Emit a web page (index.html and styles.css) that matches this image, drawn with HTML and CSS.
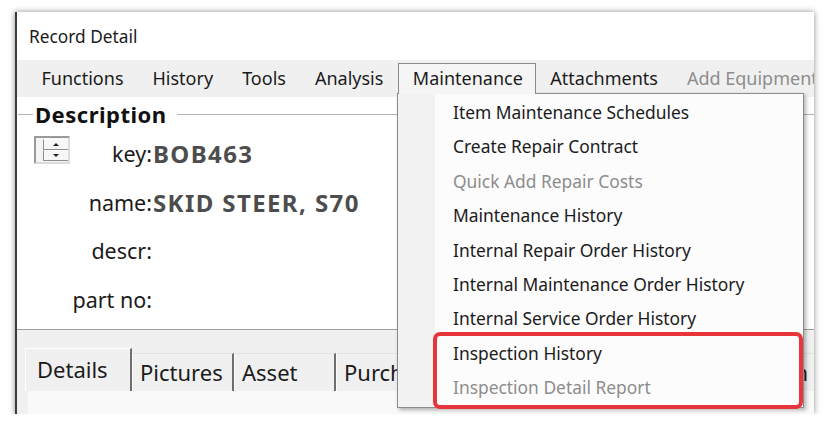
FILE: index.html
```html
<!DOCTYPE html>
<html>
<head>
<meta charset="utf-8">
<link rel="stylesheet" href="styles.css">
</head>
<body>
<div class="window">
  <div class="titlebar">Record Detail</div>
  <div class="menubar">
    <div class="mi">Functions</div>
    <div class="mi">History</div>
    <div class="mi">Tools</div>
    <div class="mi">Analysis</div>
    <div class="mi open">Maintenance</div>
    <div class="mi">Attachments</div>
    <div class="mi disabled">Add Equipment</div>
  </div>
  <div class="content">
    <div class="legend"><span class="legend-line short"></span><span class="legend-text">Description</span><span class="legend-line long"></span></div>
    <div class="row first">
      <div class="lab with-spin">
        <span class="spin"><span class="spin-btn"><i class="tri up"></i></span><span class="spin-btn"><i class="tri dn"></i></span></span>
        <span class="keylab">key:</span>
      </div>
      <div class="val">BOB463</div>
    </div>
    <div class="row"><div class="lab">name:</div><div class="val">SKID STEER, S70</div></div>
    <div class="row"><div class="lab">descr:</div><div class="val"></div></div>
    <div class="row"><div class="lab">part no:</div><div class="val"></div></div>
  </div>
  <div class="tabarea">
    <div class="tabs">
      <div class="tab sel">Details</div>
      <div class="tab">Pictures</div>
      <div class="tab">Asset</div>
      <div class="tab">Purchase</div>
      <div class="tab last">Location</div>
    </div>
    <div class="panel"></div>
  </div>

  <div class="dropdown">
    <div class="gutter"></div>
    <div class="items">
      <div class="item">Item Maintenance Schedules</div>
      <div class="item">Create Repair Contract</div>
      <div class="item disabled">Quick Add Repair Costs</div>
      <div class="item">Maintenance History</div>
      <div class="item">Internal Repair Order History</div>
      <div class="item">Internal Maintenance Order History</div>
      <div class="item">Internal Service Order History</div>
      <div class="item">Inspection History</div>
      <div class="item disabled">Inspection Detail Report</div>
    </div>
  </div>
  <div class="highlight"></div>
</div>
</body>
</html>
```
FILE: styles.css
```css
html, body {
  margin: 0;
  padding: 0;
  background: #ffffff;
}
body {
  font-family: "Noto Sans", "Open Sans", sans-serif;
  color: #1b1b1b;
  padding: 12px 0 0 15px;
}
.window {
  position: relative;
  width: 797px;
  height: 402px;
  background: #ffffff;
  border-left: 2px solid #3c3c3c;
  box-shadow: 0 0 6px rgba(0,0,0,0.45);
  overflow: hidden;
  display: flex;
  flex-direction: column;
}
.titlebar {
  height: 48px;
  display: flex;
  align-items: center;
  padding-left: 12px;
  font-size: 17.3px;
  flex: none;
}
.menubar {
  height: 37px;
  background: #f0f0f0;
  display: flex;
  align-items: flex-start;
  padding-top: 3px;
  padding-left: 10px;
  box-sizing: border-box;
  flex: none;
}
.mi {
  height: 31px;
  line-height: 30px;
  padding: 0 14.5px;
  font-size: 18px;
  white-space: nowrap;
  box-sizing: border-box;
}
.mi.open {
  position: relative;
  z-index: 3;
  height: 31px;
  background: #f5f5f5;
  border: 1px solid #8c8c8c;
  border-bottom: none;
  padding: 0 12px 0 14px;
  line-height: 29px;
}
.mi.disabled { color: #8d8d8d; }
.content {
  height: 233px;
  flex: none;
  border-bottom: 1px solid #a0a0a0;
  box-sizing: border-box;
}
.legend {
  display: flex;
  align-items: center;
  height: 28px;
  margin-top: 3px;
}
.legend-line {
  height: 1px;
  background: #b4b4b4;
}
.legend-line.short { width: 15px; margin-left: 1px; }
.legend-line.long { flex: 1; }
.legend-text {
  font-weight: bold;
  font-size: 22px;
  padding: 0 10px 0 2px;
  letter-spacing: 0.5px;
  color: #111;
}
.row {
  display: flex;
  align-items: center;
  height: 48.5px;
}
.row.first { height: 50px; }
.lab {
  width: 135px;
  flex: none;
  text-align: right;
  font-size: 21.5px;
  color: #1b1b1b;
  white-space: nowrap;
}
.lab.with-spin {
  align-self: stretch;
  display: flex;
  justify-content: space-between;
  align-items: center;
  padding-left: 17px;
  box-sizing: border-box;
}
.spin {
  align-self: flex-start;
  margin-top: 8px;
  width: 36px;
  height: 28px;
  box-sizing: border-box;
  border: 2px solid #9a9a9a;
  border-right-color: #dcdcdc;
  border-bottom-color: #dcdcdc;
  display: flex;
  flex-direction: column;
  align-items: flex-end;
  justify-content: center;
  background: #f4f4f4;
}
.spin-btn {
  width: 25px;
  height: 11px;
  display: flex;
  align-items: center;
  justify-content: center;
  border-left: 1px solid #8e8e8e;
  border-bottom: 1px solid #8e8e8e;
  border-top: 1px solid #ffffff;
  background: #f7f7f7;
  box-sizing: border-box;
}
.tri {
  display: block;
  width: 0;
  height: 0;
  border-left: 3px solid transparent;
  border-right: 3px solid transparent;
}
.tri.up { border-bottom: 3px solid #222; }
.tri.dn { border-top: 3px solid #222; }
.val {
  padding-left: 1px;
  font-size: 24px;
  font-weight: bold;
  letter-spacing: 1.4px;
  color: #4d4d4d;
  white-space: nowrap;
}
.tabarea {
  flex: 1;
  background: #f0f0f0;
  padding: 17px 0 0 8px;
  display: flex;
  flex-direction: column;
}
.tabs {
  display: flex;
  align-items: flex-end;
  height: 44px;
  flex: none;
}
.tab {
  height: 38px;
  line-height: 36px;
  padding: 0 7px;
  font-size: 22px;
  background: #f0f0f0;
  border-top: 1px solid #e2e2e2;
  border-left: 1px solid #fafafa;
  border-right: 2px solid #6e6e6e;
  box-sizing: border-box;
  width: 102px;
  white-space: nowrap;
  overflow: hidden;
  flex: none;
}
.tab.sel {
  height: 43px;
  line-height: 40px;
  width: 107px;
  padding-left: 11px;
  border-left: 1px solid #ffffff;
  border-top: 1px solid #ffffff;
}
.tab.last {
  width: 382px;
  text-align: right;
  padding-right: 10px;
}
.panel {
  flex: 1;
  background: #f9f9f9;
  margin-left: 3px;
}
.dropdown {
  position: absolute;
  z-index: 2;
  left: 380px;
  top: 81px;
  width: 407px;
  height: 315px;
  box-sizing: border-box;
  border: 1px solid #8c8c8c;
  background: #fcfcfc;
  box-shadow: 2px 2px 4px rgba(0,0,0,0.3);
  display: flex;
}
.gutter {
  width: 37px;
  flex: none;
  background: #f2f2f2;
}
.items {
  padding-top: 1px;
  padding-left: 18px;
}
.item {
  height: 34.4px;
  line-height: 34.4px;
  font-size: 17.4px;
  white-space: nowrap;
  color: #1b1b1b;
}
.item.disabled { color: #8d8d8d; }
.highlight {
  position: absolute;
  z-index: 4;
  left: 416px;
  top: 320px;
  width: 370px;
  height: 77px;
  box-sizing: border-box;
  border: 4px solid #e8353c;
  border-radius: 7px;
}
```
